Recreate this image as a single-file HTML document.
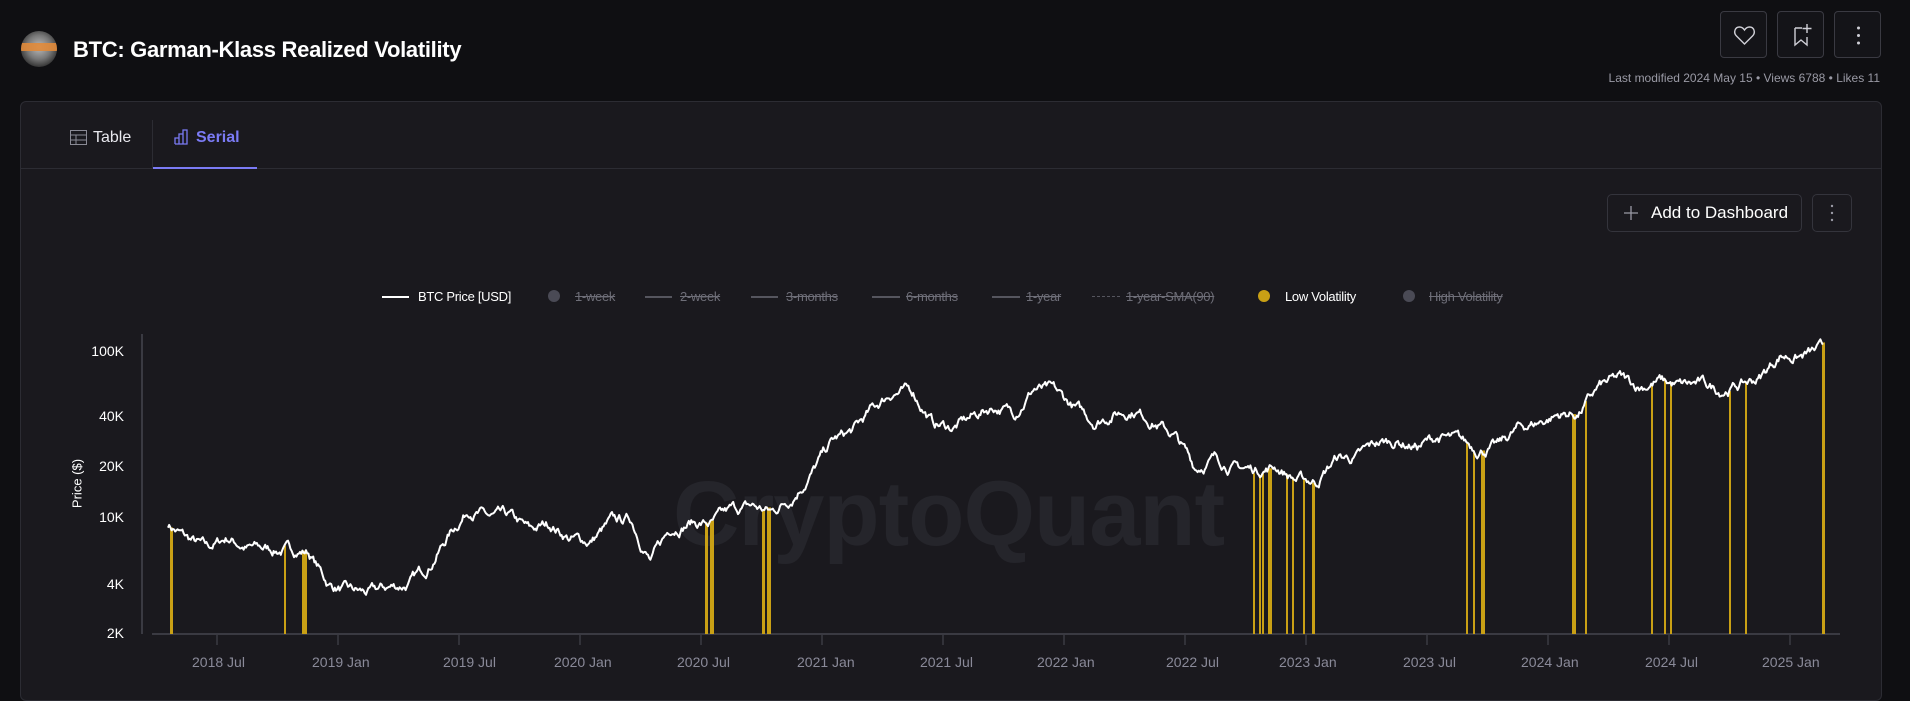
<!DOCTYPE html>
<html><head><meta charset="utf-8">
<style>
*{box-sizing:border-box;margin:0;padding:0}
body{width:1910px;height:677px;background:#0f0f12;font-family:"Liberation Sans",sans-serif;color:#fff;position:relative;overflow:hidden}
.abs{position:absolute}
.title{left:73px;top:37px;font-size:22px;font-weight:bold;letter-spacing:-0.3px}
.avatar{left:21px;top:31px;width:36px;height:36px;border-radius:50%;background:radial-gradient(circle at 50% 45%,#bbb 0,#777 45%,#333 75%);overflow:hidden}
.avatar:after{content:"";position:absolute;left:0;top:12px;width:36px;height:8px;background:#e08a3a;opacity:.9}
.btn{top:11px;width:47px;height:47px;border:1px solid #3a3a42;border-radius:4px;background:#141418}
.meta{right:30px;top:71px;font-size:12px;color:#9a9aa5}
.card{left:20px;top:101px;width:1862px;height:600px;background:#1a191e;border:1px solid #2c2c33;border-radius:6px}
.tabs{left:20px;top:168px;width:1862px;height:1px;background:#2c2c33}
.tab{top:129px;font-size:16px}
.legend{top:289px;font-size:13px;color:#6e6e78;text-decoration:line-through;white-space:nowrap;letter-spacing:-0.3px}
.lline{top:296px;height:2px;background:#55555e}
.ylab{font-size:14px;color:#fff;width:60px;text-align:right;left:64px}
.xlab{top:654px;font-size:14px;color:#8a8a99}
</style></head><body>
<div class="abs avatar"></div>
<div class="abs title">BTC: Garman-Klass Realized Volatility</div>
<div class="abs btn" style="left:1720px"><svg width="47" height="47"><path d="M23.5 32 L15.5 24 C12 20.5 14 15 18.5 15 C21 15 22.5 16.5 23.5 18 C24.5 16.5 26 15 28.5 15 C33 15 35 20.5 31.5 24 Z" fill="none" stroke="#cfcfd6" stroke-width="1.4"/></svg></div>
<div class="abs btn" style="left:1777px"><svg width="47" height="47"><path d="M17 16 L17 33 L23 28 L29 33 L29 25 M17 16 L24 16" fill="none" stroke="#cfcfd6" stroke-width="1.4"/><path d="M29 12 L29 21 M24.5 16.5 L33.5 16.5" stroke="#cfcfd6" stroke-width="1.4"/></svg></div>
<div class="abs btn" style="left:1834px"><svg width="47" height="47"><circle cx="23.5" cy="16" r="1.5" fill="#cfcfd6"/><circle cx="23.5" cy="23.5" r="1.5" fill="#cfcfd6"/><circle cx="23.5" cy="31" r="1.5" fill="#cfcfd6"/></svg></div>
<div class="abs meta">Last modified 2024 May 15 • Views 6788 • Likes 11</div>
<div class="abs card"></div>
<div class="abs tabs"></div>
<div class="abs" style="left:152px;top:120px;width:1px;height:48px;background:#2c2c33"></div>
<svg class="abs" style="left:70px;top:130px" width="17" height="15"><rect x="0.5" y="0.5" width="16" height="14" fill="none" stroke="#8a8a95"/><path d="M0.5 5 H16.5 M0.5 10 H16.5 M6 5 V14.5" stroke="#8a8a95"/></svg>
<div class="abs tab" style="left:93px;color:#e8e8ee">Table</div>
<svg class="abs" style="left:174px;top:129px" width="16" height="16"><path d="M1 15 V9 H5 V15 M5 15 V5 H9 V15 M9 15 V1 H13 V15 H1" fill="none" stroke="#7b7bf5" stroke-width="1.3"/></svg>
<div class="abs tab" style="left:196px;color:#7b7bf5;font-weight:bold">Serial</div>
<div class="abs" style="left:153px;top:167px;width:104px;height:2px;background:#7b7bf5"></div>
<div class="abs" style="left:1607px;top:194px;width:195px;height:38px;border:1px solid #34343c;border-radius:5px"></div>
<svg class="abs" style="left:1623px;top:205px" width="16" height="16"><path d="M8 1 V15 M1 8 H15" stroke="#9a9aa5" stroke-width="1.3"/></svg>
<div class="abs" style="left:1651px;top:203px;font-size:17px;color:#fff">Add to Dashboard</div>
<div class="abs" style="left:1812px;top:194px;width:40px;height:38px;border:1px solid #34343c;border-radius:5px"></div>
<svg class="abs" style="left:1812px;top:194px" width="40" height="38"><circle cx="20" cy="12" r="1.2" fill="#9a9aa5"/><circle cx="20" cy="19" r="1.2" fill="#9a9aa5"/><circle cx="20" cy="26" r="1.2" fill="#9a9aa5"/></svg>

<div class="abs lline" style="left:382px;width:27px;background:#fff"></div>
<div class="abs legend" style="left:418px;color:#fff;text-decoration:none">BTC Price [USD]</div>
<div class="abs" style="left:548px;top:290px;width:12px;height:12px;border-radius:50%;background:#4a4a55"></div>
<div class="abs legend" style="left:575px">1-week</div>
<div class="abs lline" style="left:645px;width:27px"></div>
<div class="abs legend" style="left:680px">2-week</div>
<div class="abs lline" style="left:751px;width:27px"></div>
<div class="abs legend" style="left:786px">3-months</div>
<div class="abs lline" style="left:872px;width:28px"></div>
<div class="abs legend" style="left:906px">6-months</div>
<div class="abs lline" style="left:992px;width:28px"></div>
<div class="abs legend" style="left:1026px">1-year</div>
<div class="abs lline" style="left:1092px;width:28px;height:0;border-top:1px dashed #55555e;background:none"></div>
<div class="abs legend" style="left:1126px">1-year-SMA(90)</div>
<div class="abs" style="left:1258px;top:290px;width:12px;height:12px;border-radius:50%;background:#c9a015"></div>
<div class="abs legend" style="left:1285px;color:#fff;text-decoration:none">Low Volatility</div>
<div class="abs" style="left:1403px;top:290px;width:12px;height:12px;border-radius:50%;background:#4a4a55"></div>
<div class="abs legend" style="left:1429px">High Volatility</div>

<div class="abs" style="left:673px;top:462px;font-size:92px;font-weight:bold;color:#25252b;letter-spacing:-1px">CryptoQuant</div>

<div class="abs ylab" style="top:343px">100K</div>
<div class="abs ylab" style="top:408px">40K</div>
<div class="abs ylab" style="top:458px">20K</div>
<div class="abs ylab" style="top:509px">10K</div>
<div class="abs ylab" style="top:576px">4K</div>
<div class="abs ylab" style="top:625px">2K</div>
<div class="abs" style="left:47px;top:476px;width:60px;text-align:center;font-size:13px;transform:rotate(-90deg)">Price ($)</div>

<svg class="abs" style="left:0;top:0" width="1910" height="677" id="ch">
<line x1="142" y1="334" x2="142" y2="634" stroke="#3a3a42" stroke-width="2"/>
<line x1="152" y1="634" x2="1840" y2="634" stroke="#3a3a42" stroke-width="2"/>
<g id="ticks" stroke="#3a3a42" stroke-width="1.5"></g>
<g id="bars"></g>
<polyline id="pl" fill="none" stroke="#fff" stroke-width="2" stroke-linejoin="round"/>
</svg>
<div class="abs xlab" style="left:192px">2018 Jul</div>
<div class="abs xlab" style="left:312px">2019 Jan</div>
<div class="abs xlab" style="left:443px">2019 Jul</div>
<div class="abs xlab" style="left:554px">2020 Jan</div>
<div class="abs xlab" style="left:677px">2020 Jul</div>
<div class="abs xlab" style="left:797px">2021 Jan</div>
<div class="abs xlab" style="left:920px">2021 Jul</div>
<div class="abs xlab" style="left:1037px">2022 Jan</div>
<div class="abs xlab" style="left:1166px">2022 Jul</div>
<div class="abs xlab" style="left:1279px">2023 Jan</div>
<div class="abs xlab" style="left:1403px">2023 Jul</div>
<div class="abs xlab" style="left:1521px">2024 Jan</div>
<div class="abs xlab" style="left:1645px">2024 Jul</div>
<div class="abs xlab" style="left:1762px">2025 Jan</div>
<script>
var P=[9000,9300,7500,6500,7600,6600,6500,6400,6300,4000,3600,3500,3800,4000,5200,8000,11500,10000,10000,8300,9200,7500,7200,9300,9800,5500,8800,9500,9200,11000,11700,10800,13500,19000,29000,33000,45000,58000,57000,37000,35000,41000,47000,43000,61000,57000,46000,38000,43000,45000,38000,31000,20000,23000,20000,19500,20500,17000,16600,23000,23000,28000,29000,27000,30500,29000,26000,27000,34500,37700,42000,42500,61000,69000,62000,67000,62000,64000,59000,63000,70000,96000,94000,102000,96000];
function Y(p){return 634-166*Math.log10(p/2000)}
var seed=7;function r(){seed=(seed*16807)%2147483647;return seed/2147483647-0.5}
var pts=[],ys={};var t0=2018.21;var noise=0;
for(var x=168;x<=1823;x+=1.2){var t=2018.5+(x-217)/242;var mi=(t-t0)*12;if(mi<0)mi=0;var i=Math.floor(mi),f=mi-i;if(i>=P.length-1){i=P.length-2;f=1}
var lp=Math.log10(P[i])*(1-f)+Math.log10(P[i+1])*f;noise=noise*0.85+r()*0.045;var y=Y(Math.pow(10,lp+noise));pts.push(x.toFixed(1)+","+y.toFixed(1));ys[Math.round(x)]=y;}
document.getElementById("pl").setAttribute("points",pts.join(" "));
function yat(x){for(var d=0;d<3;d++){if(ys[x+d])return ys[x+d];if(ys[x-d])return ys[x-d]}return 500}
var B=[[170,3],[284,2],[302,5],[705,3],[710,4],[762,3],[767,4],[1253,2],[1259,2],[1262,2],[1268,4],[1286,2],[1292,2],[1303,2],[1312,3],[1466,2],[1473,2],[1481,4],[1572,4],[1585,2],[1651,2],[1664,2],[1670,2],[1729,2],[1745,2],[1822,3]];
var g="";B.forEach(function(b){var y=yat(b[0]);g+='<rect x="'+b[0]+'" y="'+y+'" width="'+b[1]+'" height="'+(634-y)+'" fill="#c9a015"/>'});
document.getElementById("bars").innerHTML=g;
var tk="";[217,338,459,580,701,822,943,1064,1185,1306,1427,1548,1669,1790].forEach(function(x){tk+='<line x1="'+x+'" y1="634" x2="'+x+'" y2="645"/>'});
document.getElementById("ticks").innerHTML=tk;
</script>
</body></html>
